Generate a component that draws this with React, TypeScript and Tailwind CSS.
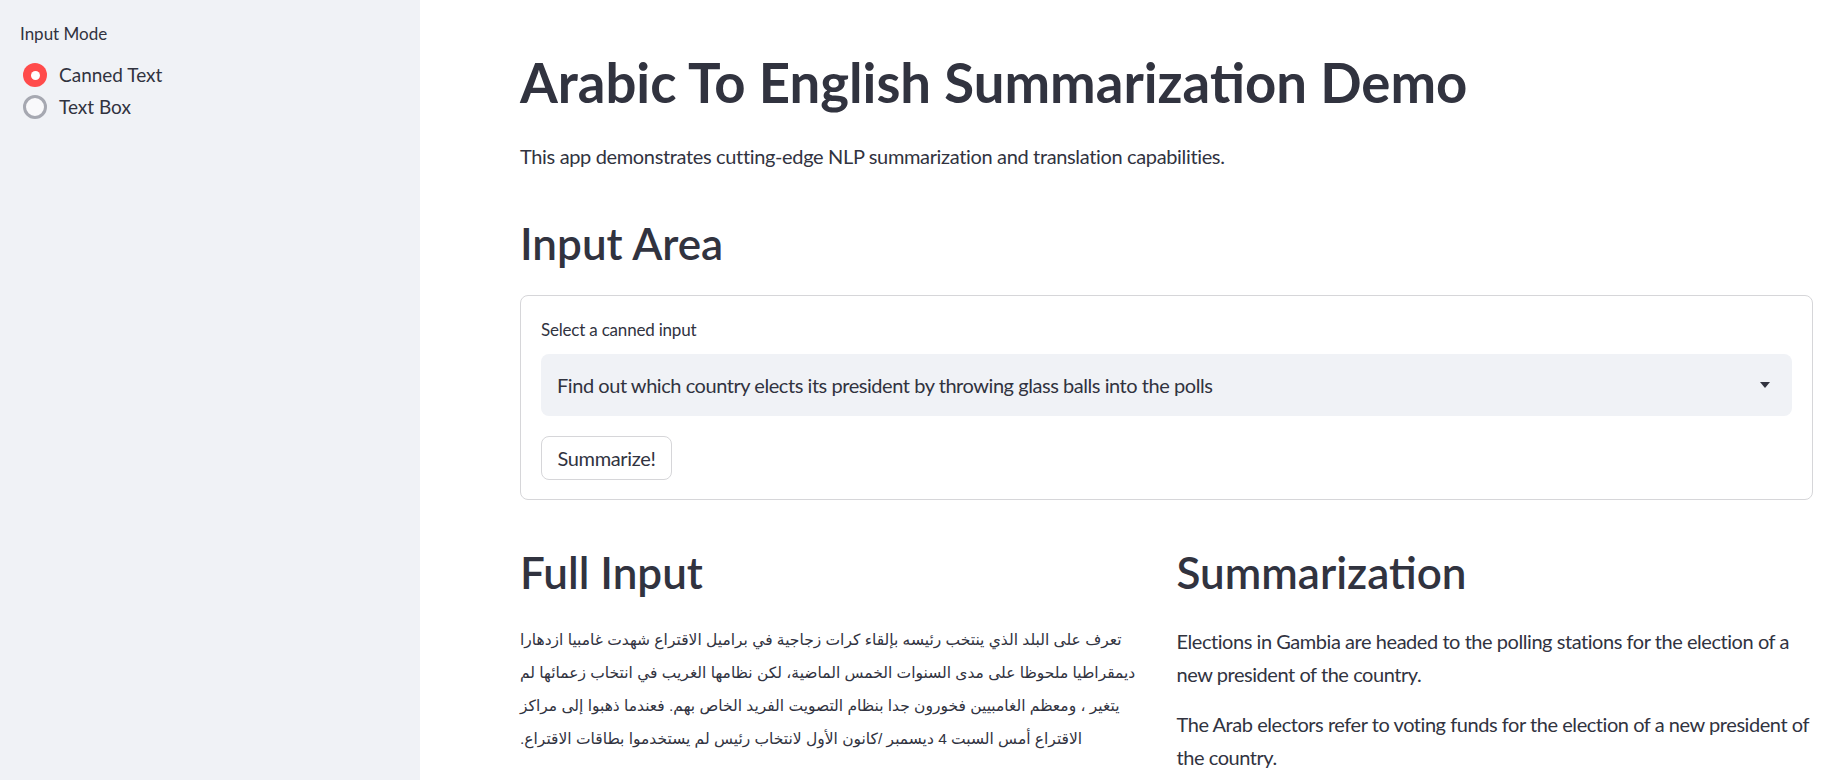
const arabicLines = [
  "تعرف على البلد الذي ينتخب رئيسه بإلقاء كرات زجاجية في براميل الاقتراع شهدت غامبيا ازدهارا",
  "ديمقراطيا ملحوظا على مدى السنوات الخمس الماضية، لكن نظامها الغريب في انتخاب زعمائها لم",
  "يتغير ، ومعظم الغامبيين فخورون جدا بنظام التصويت الفريد الخاص بهم. فعندما ذهبوا إلى مراكز",
  "الاقتراع أمس السبت 4 ديسمبر /كانون الأول لانتخاب رئيس لم يستخدموا بطاقات الاقتراع.",
];

const arabicNext = [
  "وبدلا من ذلك ألقى الناخبون كرات زجاجية صغيرة في براميل معدنية تحمل صور المرشحين",
];

const summary = [
  "Elections in Gambia are headed to the polling stations for the election of a new president of the country.",
  "The Arab electors refer to voting funds for the election of a new president of the country.",
];

// the source paragraph is rtl text aligned to the left edge
const ArabicLine = ({ text }: { text: string }) => (
  <div dir="rtl" className="text-left whitespace-nowrap">
    {text}
  </div>
);

const Radio = ({ label, checked }: { label: string; checked?: boolean }) => (
  <div className="flex items-center h-8 gap-3">
    {checked ? (
      <div className="ml-[3px] w-6 h-6 rounded-full bg-[#ff4b4b] flex items-center justify-center">
        <div className="w-[9px] h-[9px] rounded-full bg-white" />
      </div>
    ) : (
      <div className="ml-[3px] w-6 h-6 rounded-full border-[3px] border-[#a6a8b1] bg-[#f9f9fb]" />
    )}
    <span className="text-[19px] leading-6">{label}</span>
  </div>
);

const App = () => {
  return (
    <div className="flex h-[780px] w-full overflow-hidden bg-white text-[#31333f] font-[Lato,sans-serif]">
      <aside className="w-[420px] shrink-0 bg-[#f0f2f6] px-5 pt-[22px]">
        <div className="text-[17px] leading-6">Input Mode</div>
        <div className="mt-[13px] flex flex-col">
          <Radio label="Canned Text" checked />
          <Radio label="Text Box" />
        </div>
      </aside>

      <main className="flex-1 pl-[100px] pr-[32px] pt-[51px]">
        <h1 className="text-[54.5px] leading-[62px] font-bold">
          Arabic To English Summarization Demo
        </h1>
        <p className="mt-[27px] text-[20px] leading-8 tracking-[-0.35px]">
          This app demonstrates cutting-edge NLP summarization and translation capabilities.
        </p>

        <h2 className="mt-[47px] text-[44px] leading-[48px] font-semibold">Input Area</h2>

        <div className="mt-[28px] rounded-lg border border-[#d6d6d9] px-5 pt-[19px] pb-[19px]">
          <div className="text-[17px] leading-[30px] tracking-[-0.2px]">Select a canned input</div>
          <div className="mt-[9px] h-[62px] rounded-lg bg-[#f0f2f6] flex items-center justify-between pl-4 pr-[22px]">
            <span className="text-[20px] tracking-[-0.45px]">
              Find out which country elects its president by throwing glass balls into the polls
            </span>
            <svg width="10" height="6" viewBox="0 0 10 6" className="fill-[#31333f]">
              <path d="M0 0h10L5 6z" />
            </svg>
          </div>
          <button className="mt-5 h-11 w-[131px] rounded-lg border border-[#d6d6d9] bg-white text-[20px] tracking-[-0.35px]">
            Summarize!
          </button>
        </div>

        <div className="mt-[48px] grid grid-cols-2 gap-5">
          <div>
            <h2 className="text-[44px] leading-[49px] font-semibold">Full Input</h2>
            <div className="mt-[26px] text-[15.5px] leading-[33px] font-['Liberation_Sans','DejaVu_Sans',sans-serif]">
              {arabicLines.map((l, i) => (
                <ArabicLine key={i} text={l} />
              ))}
            </div>
            <div className="mt-[19px] text-[15.5px] leading-[33px] font-['Liberation_Sans','DejaVu_Sans',sans-serif]">
              {arabicNext.map((l, i) => (
                <ArabicLine key={i} text={l} />
              ))}
            </div>
          </div>
          <div>
            <h2 className="text-[44px] leading-[49px] font-semibold">Summarization</h2>
            <div className="mt-[28px]">
              {summary.map((s, i) => (
                <p key={i} className="mb-[17px] text-[20px] leading-[33px] tracking-[-0.45px]">
                  {s}
                </p>
              ))}
            </div>
          </div>
        </div>
      </main>
    </div>
  );
};

export default App;
